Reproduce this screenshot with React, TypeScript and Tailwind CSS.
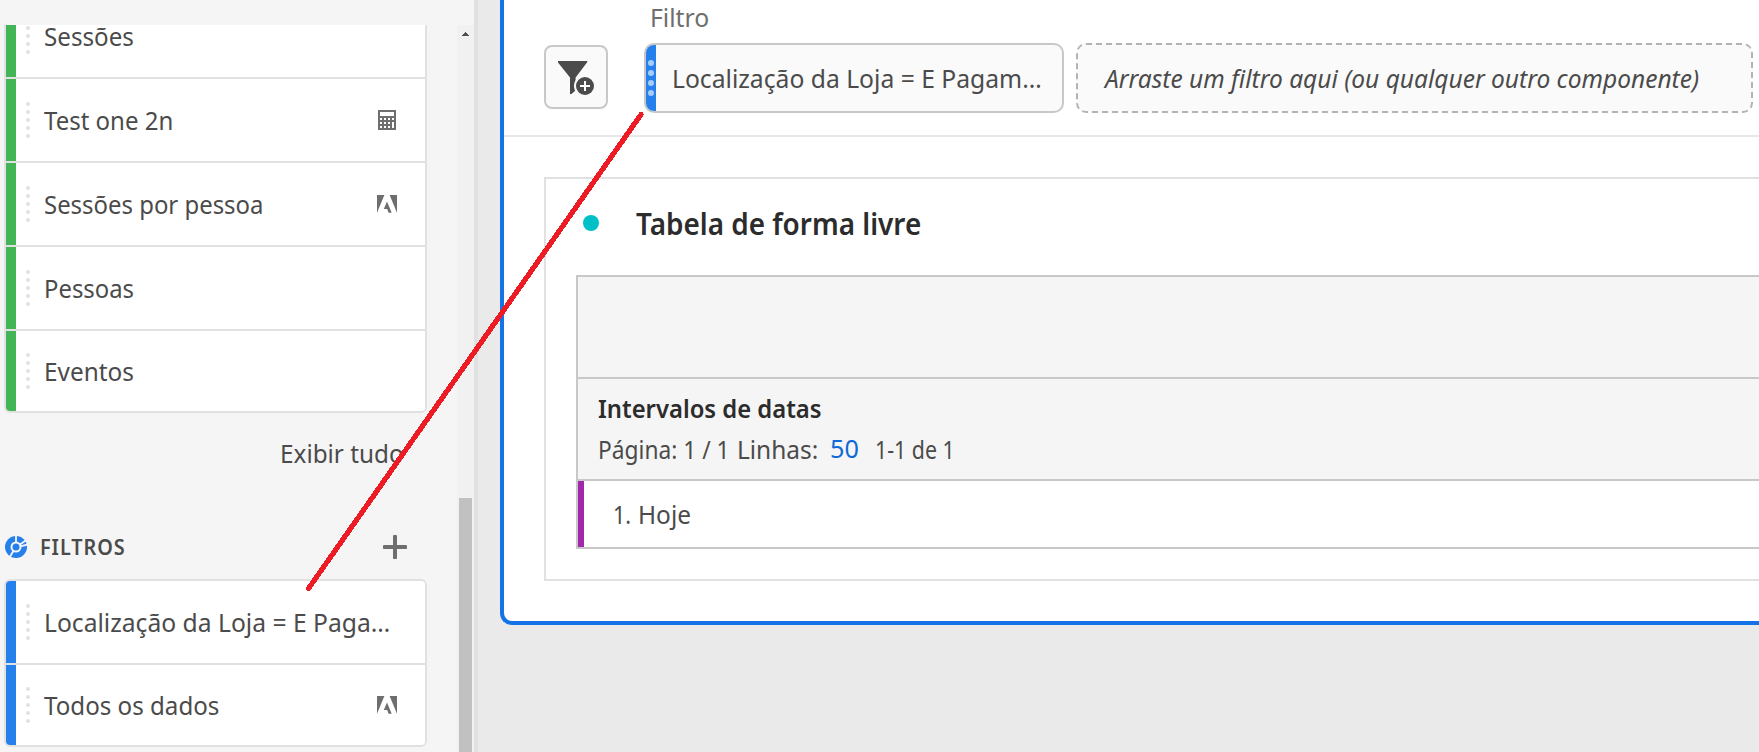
import type { ReactNode } from "react";

function T({ children, className = "" }: { children: ReactNode; className?: string }) {
  return <span className={`inline-block origin-left whitespace-pre ${className}`}>{children}</span>;
}

function CalculatorIcon() {
  return (
    <svg width="18" height="20" viewBox="0 0 18 20" shapeRendering="crispEdges">
      <rect width="18" height="20" rx="1" fill="#6e6e6e" />
      <g fill="#fff">
        <rect x="2" y="2" width="14" height="4" />
        <rect x="2" y="8" width="2" height="2" />
        <rect x="6" y="8" width="2" height="2" />
        <rect x="10" y="8" width="2" height="2" />
        <rect x="14" y="8" width="2" height="2" />
        <rect x="2" y="12" width="2" height="2" />
        <rect x="6" y="12" width="2" height="2" />
        <rect x="10" y="12" width="2" height="2" />
        <rect x="2" y="16" width="2" height="2" />
        <rect x="6" y="16" width="2" height="2" />
        <rect x="10" y="16" width="2" height="2" />
        <rect x="14" y="12" width="2" height="6" />
      </g>
    </svg>
  );
}

function AdobeIcon() {
  return (
    <svg width="20" height="18" viewBox="0 0 20 18" fill="#6e6e6e">
      <path d="M0 0H7.4L0 17.7Z" />
      <path d="M12.6 0H20V17.7Z" />
      <path d="M10 6.5L14.7 17.7H11.6L10.2 14.1H6.8Z" />
    </svg>
  );
}

function SegmentIcon() {
  return (
    <svg width="22" height="22" viewBox="0 0 22 22" className="shrink-0">
      <circle cx="11" cy="11" r="11" fill="#2680eb" />
      <circle cx="11" cy="11" r="4.5" fill="none" stroke="#f5f5f5" strokeWidth="2" />
      <path d="M11 0V6M15 8.4L21 4.2M16 10.2L22.5 8.6M8.4 15L4.8 21" stroke="#f5f5f5" strokeWidth="1.8" fill="none" />
    </svg>
  );
}

function FilterAddIcon() {
  return (
    <svg width="38" height="36" viewBox="0 0 38 36" className="mt-px">
      <path d="M1 1H30.5L30 2.6L18.6 17.4V30.4L14.4 34H13V17.4L1 2.6Z" fill="#4b4b4b" />
      <circle cx="28" cy="26" r="11" fill="#fafafa" />
      <circle cx="28" cy="26" r="9" fill="#4b4b4b" />
      <path d="M28 21V31M23 26H33" stroke="#fff" strokeWidth="2" />
    </svg>
  );
}

function Row({
  label,
  scale,
  icon,
  color,
  last,
}: {
  label: string;
  scale: string;
  icon?: ReactNode;
  color: string;
  last?: boolean;
}) {
  return (
    <div className={`flex items-stretch bg-white ${last ? "h-20" : "h-[84px] border-b-2 border-[#e1e1e1]"}`}>
      <div className={`w-[10px] shrink-0 ${color}`} />
      <div className="ml-[10px] flex w-1 shrink-0 flex-col justify-center gap-1">
        {[0, 1, 2, 3, 4].map((i) => (
          <span key={i} className="size-1 rounded-full bg-[#e1e1e1]" />
        ))}
      </div>
      <div className="ml-[14px] flex min-w-0 flex-1 items-center">
        <T className={scale}>{label}</T>
      </div>
      <div className="flex w-[30px] shrink-0 items-center justify-center">{icon}</div>
      <div className="w-[23px] shrink-0" />
    </div>
  );
}

function Sidebar() {
  return (
    <aside className="flex h-full w-[478px] shrink-0 flex-col border-r-4 border-[#e1e1e1] bg-[#f5f5f5]">
      <div className="h-[25px] shrink-0" />
      <div className="flex min-h-0 flex-1">
        <div className="w-[457px] overflow-hidden pl-1">
          <div className="-mt-[32px] w-[423px] overflow-hidden rounded-md border-2 border-[#e1e1e1]">
            <Row label="Sessões" scale="scale-x-[0.93]" color="bg-[#44b556]" />
            <Row label="Test one 2n" scale="scale-x-[0.923]" color="bg-[#44b556]" icon={<CalculatorIcon />} />
            <Row label="Sessões por pessoa" scale="scale-x-[0.92]" color="bg-[#44b556]" icon={<AdobeIcon />} />
            <Row label="Pessoas" scale="scale-x-[0.918]" color="bg-[#44b556]" />
            <Row label="Eventos" scale="scale-x-[0.937]" color="bg-[#44b556]" last />
          </div>
          <div className="flex h-20 items-center pl-[276px]">
            <T className="scale-x-[0.935]">Exibir tudo</T>
          </div>
          <div className="flex h-[86px] items-center pt-[22px] pl-px">
            <SegmentIcon />
            <div className="ml-[13px] flex-1 text-[21px] font-semibold">
              <T className="scale-x-[0.945] tracking-[1px]">FILTROS</T>
            </div>
            <svg width="24" height="24" viewBox="0 0 24 24" className="mr-[50px]">
              <path d="M12 1.5V22.5M1.5 12H22.5" stroke="#6e6e6e" strokeWidth="4" strokeLinecap="round" />
            </svg>
          </div>
          <div className="w-[423px] overflow-hidden rounded-md border-2 border-[#e1e1e1]">
            <Row label="Localização da Loja = E Paga…" scale="scale-x-[0.948]" color="bg-[#2680eb]" />
            <Row label="Todos os dados" scale="scale-x-[0.928]" color="bg-[#2680eb]" icon={<AdobeIcon />} last />
          </div>
        </div>
        <div className="flex w-[17px] flex-col items-center bg-[#f1f1f1]">
          <svg width="7" height="4" viewBox="0 0 7 4" className="mt-[7px] shrink-0" shapeRendering="crispEdges">
            <path d="M3 0H4V1H5V2H6V3H7V4H0V3H1V2H2V1H3Z" fill="#505050" />
          </svg>
          <div className="mt-[462px] w-[13px] flex-1 bg-[#c1c1c1]" />
        </div>
      </div>
    </aside>
  );
}

function FilterBar() {
  return (
    <div className="h-[137px] border-b-2 border-[#e8e8e8]">
      <div className="flex h-[43px] items-start pl-[146px] text-[#6e6e6e]">
        <T className="scale-x-[0.95] leading-[34px]">Filtro</T>
      </div>
      <div className="flex h-[70px] pl-10">
        <div className="mt-[2px] flex size-16 shrink-0 items-center justify-center rounded-lg border-2 border-[#c8c8c8] bg-[#fafafa]">
          <FilterAddIcon />
        </div>
        <div className="ml-9 flex w-[420px] shrink-0 overflow-hidden rounded-[10px] border-2 border-[#c8c8c8] bg-[#fafafa]">
          <div className="flex w-[10px] shrink-0 flex-col items-center justify-center gap-1 bg-[#2680eb]">
            {[0, 1, 2, 3].map((i) => (
              <span key={i} className="size-[6px] shrink-0 rounded-full bg-[#a8ccf7]" />
            ))}
          </div>
          <div className="flex items-center pl-4">
            <T className="scale-x-[0.949]">Localização da Loja = E Pagam…</T>
          </div>
        </div>
        <div className="ml-3 flex w-[677px] shrink-0 items-center rounded-[10px] border-2 border-dashed border-[#b3b3b3] bg-[#fafafa] pl-[27px] italic">
          <T className="scale-x-[0.943]">Arraste um filtro aqui (ou qualquer outro componente)</T>
        </div>
      </div>
    </div>
  );
}

function FreeformTable() {
  return (
    <section className="ml-10 mt-10 h-[404px] border-y-2 border-l-2 border-[#e1e1e1]">
      <div className="flex h-24 items-center pb-2 pl-[37px]">
        <span className="size-4 shrink-0 rounded-full bg-[#00c0c7]" />
        <div className="ml-[37px] pt-[2px] text-[30px] leading-10 font-semibold text-[#2c2c2c]">
          <T className="scale-x-[0.93]">Tabela de forma livre</T>
        </div>
      </div>
      <div className="ml-[30px] border-y-2 border-l-2 border-[#c8c8c8]">
        <div className="h-[102px] border-b-2 border-[#c8c8c8] bg-[#f5f5f5]" />
        <div className="h-[102px] border-b-2 border-[#c8c8c8] bg-[#f5f5f5] pt-[9px] pl-5 leading-[41px]">
          <div className="font-semibold text-[#2c2c2c]">
            <T className="scale-x-[0.916]">Intervalos de datas</T>
          </div>
          <div className="flex">
            <div className="w-[139px]">
              <T className="scale-x-[0.875]">Página: 1 / 1</T>
            </div>
            <div className="w-[93px]">
              <T className="scale-x-[0.94]">Linhas:</T>
            </div>
            <div className="-mt-px w-[45px] text-[#1168d8]">
              <T className="scale-x-[0.97]">50</T>
            </div>
            <T className="scale-x-[0.82]">1-1 de 1</T>
          </div>
        </div>
        <div className="flex h-[66px] items-center bg-white">
          <div className="h-full w-[6px] bg-[#a128ac]" />
          <div className="ml-[29px] w-[25px]">
            <T className="scale-x-[0.83]">1.</T>
          </div>
          <T className="scale-x-[0.94]">Hoje</T>
        </div>
      </div>
    </section>
  );
}

export default function App() {
  return (
    <div className="relative flex h-[752px] w-[1759px] overflow-hidden bg-[#eaeaea] font-['Noto_Sans',sans-serif] text-[26px] leading-[34px] text-[#4b4b4b]">
      <Sidebar />
      <main className="ml-[22px] h-[625px] min-w-0 flex-1 overflow-hidden rounded-bl-xl border-b-4 border-l-4 border-[#1473e6] bg-white">
        <FilterBar />
        <FreeformTable />
      </main>
      <svg className="pointer-events-none absolute inset-0" width="1759" height="752" viewBox="0 0 1759 752">
        <path d="M308.5 588.5L641 114.5" stroke="#ed1c24" strokeWidth="5.2" strokeLinecap="round" shapeRendering="crispEdges" />
      </svg>
    </div>
  );
}
